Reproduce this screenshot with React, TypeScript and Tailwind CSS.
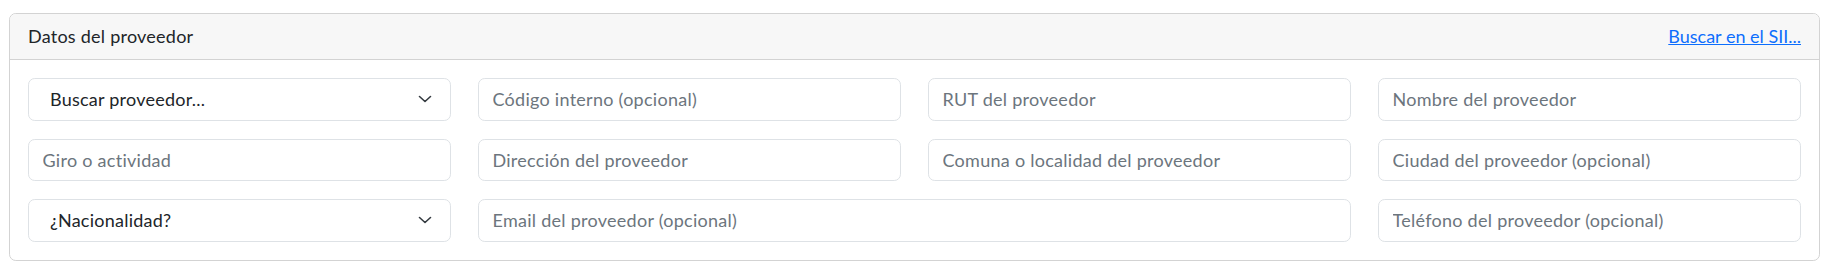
import React from "react";

const font = { fontFamily: "Lato, 'Noto Sans', sans-serif" };

const Chevron = () => (
  <svg width="14" height="8" viewBox="0 0 14 8" fill="none" className="shrink-0">
    <path d="M1.5 1.5l5.5 5 5.5-5" stroke="#343a40" strokeWidth="1.6" strokeLinecap="round" strokeLinejoin="round" />
  </svg>
);

const Field = ({ placeholder, className = "" }: { placeholder: string; className?: string }) => (
  <input
    placeholder={placeholder}
    className={
      "h-[42.5px] w-full rounded-[6.75px] border border-[#dee2e6] bg-white px-[13.5px] text-[18px] leading-[27px] tracking-[0.015em] text-[#212529] outline-none placeholder:text-[#6c757d] " +
      className
    }
    style={font}
  />
);

const Select = ({ label }: { label: string }) => (
  <div className="flex h-[42.5px] w-full items-center justify-between rounded-[6.75px] border border-[#dee2e6] bg-white pl-[21px] pr-[18px] text-[18px] leading-[27px] text-[#212529]">
    <span>{label}</span>
    <Chevron />
  </div>
);

export default function App() {
  return (
    <div className="min-h-[273px] bg-white px-[9px] pt-[13px] tracking-[0.015em]" style={font}>
      <div className="rounded-[6.75px] border border-[#d3d3d3]">
        <div className="flex items-center justify-between rounded-t-[6px] border-b border-[#d3d3d3] bg-[#f7f7f7] px-[18px] py-[9px] text-[18px] leading-[27px] text-[#212529]">
          <span>Datos del proveedor</span>
          <a href="#" className="tracking-normal text-[#0d6efd] underline">
            Buscar en el SII...
          </a>
        </div>
        <div className="grid grid-cols-4 gap-x-[27px] gap-y-[18px] p-[18px]">
          <Select label="Buscar proveedor..." />
          <Field placeholder="Código interno (opcional)" />
          <Field placeholder="RUT del proveedor" />
          <Field placeholder="Nombre del proveedor" />
          <Field placeholder="Giro o actividad" />
          <Field placeholder="Dirección del proveedor" />
          <Field placeholder="Comuna o localidad del proveedor" />
          <Field placeholder="Ciudad del proveedor (opcional)" />
          <Select label="¿Nacionalidad?" />
          <Field placeholder="Email del proveedor (opcional)" className="col-span-2" />
          <Field placeholder="Teléfono del proveedor (opcional)" />
        </div>
      </div>
    </div>
  );
}
